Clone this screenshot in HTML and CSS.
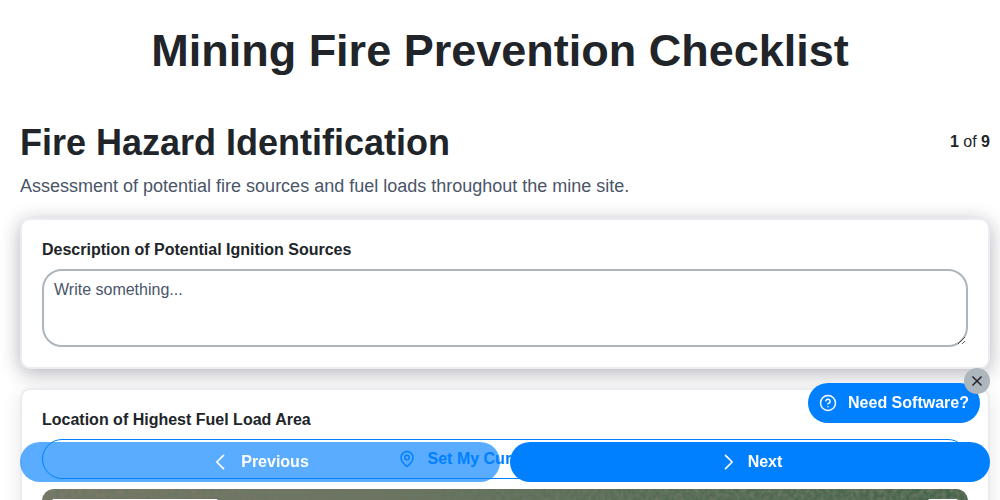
FILE: index.html
```html
<!DOCTYPE html>
<html lang="en">
<head>
    <meta charset="UTF-8">
    <meta name="viewport" content="width=device-width, initial-scale=1.0">
    <title>Mining Fire Prevention Checklist</title>
    <link rel="stylesheet" href="styles.css">
</head>
<body>
    <div class="page">
        <h1>Mining Fire Prevention Checklist</h1>
        <div class="section-head">
            <h2>Fire Hazard Identification</h2>
            <div class="step-count"><b>1</b> of <b>9</b></div>
        </div>
        <p class="section-desc">Assessment of potential fire sources and fuel loads throughout the mine site.</p>

        <div class="card card-first">
            <label class="field-label">Description of Potential Ignition Sources</label>
            <textarea class="field-text" placeholder="Write something..."></textarea>
        </div>

        <div class="card">
            <label class="field-label">Location of Highest Fuel Load Area</label>
            <button class="location-btn">
                <svg class="pin" width="18" height="18" viewBox="0 0 24 24" fill="none" stroke="currentColor" stroke-width="2" stroke-linecap="round" stroke-linejoin="round"><path d="M20 10c0 6-8 12-8 12s-8-6-8-12a8 8 0 0 1 16 0z"/><circle cx="12" cy="10" r="3"/></svg>
                Set My Current Location
            </button>
            <div class="map">
                <!-- satellite imagery stand-in: noise over the gradient -->
                <svg class="map-noise" width="926" height="200">
                    <filter id="terrain">
                        <feTurbulence type="fractalNoise" baseFrequency="0.22" numOctaves="4" seed="4"/>
                        <feColorMatrix type="matrix" values="0 0 0 0 0.14  0 0 0 0 0.18  0 0 0 0 0.13  2.2 0 0 0 -0.7"/>
                    </filter>
                    <rect width="926" height="200" filter="url(#terrain)"/>
                </svg>
                <div class="map-search"></div>
                <div class="map-control"></div>
            </div>
        </div>
    </div>

    <div class="help-wrap">
        <button class="help-btn">
            <svg width="18" height="18" viewBox="0 0 24 24" fill="none" stroke="currentColor" stroke-width="2" stroke-linecap="round" stroke-linejoin="round"><circle cx="12" cy="12" r="10"/><path d="M9.1 9a3 3 0 0 1 5.8 1c0 2-3 3-3 3"/><path d="M12 17h.01"/></svg>
            Need Software?
        </button>
        <button class="help-close" aria-label="Close">
            <svg width="14" height="14" viewBox="0 0 24 24" fill="none" stroke="currentColor" stroke-width="2.6" stroke-linecap="round"><path d="M5 5l14 14M19 5L5 19"/></svg>
        </button>
    </div>

    <div class="nav-bar">
        <button class="nav-btn nav-prev">
            <svg width="20" height="20" viewBox="0 0 24 24" fill="none" stroke="currentColor" stroke-width="2" stroke-linecap="round" stroke-linejoin="round"><path d="M15 4l-8 8 8 8"/></svg>
            Previous
        </button>
        <button class="nav-btn nav-next">
            <svg width="20" height="20" viewBox="0 0 24 24" fill="none" stroke="currentColor" stroke-width="2" stroke-linecap="round" stroke-linejoin="round"><path d="M9 4l8 8-8 8"/></svg>
            Next
        </button>
    </div>
</body>
</html>
```

FILE: styles.css
```css
html, body {
    height: 100%;
    overflow: hidden;
}
body {
    font-family: "Liberation Sans", Arial, sans-serif;
    background-color: #ffffff;
    color: #212529;
    margin: 0;
}
.page {
    padding: 0 10px 0 20px;
    height: 500px;
    overflow: hidden;
    box-sizing: border-box;
}
h1 {
    font-size: 45px;
    line-height: 58px;
    font-weight: 700;
    text-align: center;
    margin: 0 10px 0 0;
    padding: 22px 0 41px;
}
.section-head {
    display: flex;
    justify-content: space-between;
    align-items: flex-start;
}
h2 {
    font-size: 36px;
    line-height: 43px;
    font-weight: 700;
    margin: 0;
}
.step-count {
    font-size: 16px;
    line-height: 19px;
    padding-top: 11px;
}
.section-desc {
    font-size: 18px;
    line-height: 22px;
    color: #4a5568;
    margin: 11px 0 21px;
}
.card {
    width: 970px;
    box-sizing: border-box;
    background-color: #ffffff;
    border: 2px solid #ebebf2;
    border-radius: 10px;
    padding: 20px;
    margin-bottom: 20px;
    box-shadow: 0 4px 20px rgba(0, 0, 0, 0.1);
}
.card-first {
    margin-bottom: 19px;
    box-shadow: 0 4px 20px rgba(20, 20, 40, 0.32);
}
.field-label {
    display: block;
    font-size: 16px;
    line-height: 19px;
    font-weight: 700;
    margin-bottom: 10px;
}
.field-text {
    display: block;
    width: 100%;
    height: 78px;
    box-sizing: border-box;
    border: 2px solid #adb5bd;
    border-radius: 20px;
    padding: 10px;
    font-family: "Liberation Sans", Arial, sans-serif;
    font-size: 16px;
    line-height: 18px;
    color: #4a5568;
    background: #ffffff;
    outline: none;
}
.field-text::placeholder {
    color: #4a5568;
    opacity: 1;
}
.location-btn {
    display: flex;
    align-items: center;
    justify-content: center;
    gap: 12px;
    width: 100%;
    height: 40px;
    background: #ffffff;
    color: #0080ff;
    border: 1px solid #0080ff;
    border-radius: 20px;
    font-family: "Liberation Sans", Arial, sans-serif;
    font-size: 16px;
    font-weight: 700;
    margin-bottom: 10px;
    padding: 0;
}
.map {
    position: relative;
    height: 200px;
    overflow: hidden;
    border-radius: 12px;
    background: linear-gradient(90deg, #7c7a66, #6e7460 35%, #556c52 65%, #446448);
}
.map-noise {
    display: block;
}
.map-search {
    position: absolute;
    left: 10px;
    top: 10px;
    width: 166px;
    height: 30px;
    background-color: #ffffff;
    border-radius: 2px;
}
.map-control {
    position: absolute;
    right: 10px;
    top: 10px;
    width: 30px;
    height: 30px;
    background-color: #ffffff;
    border-radius: 2px;
}
.nav-bar {
    position: fixed;
    left: 20px;
    right: 10px;
    top: 442px;
    display: flex;
    gap: 10px;
}
.nav-btn {
    flex: 1;
    height: 40px;
    border: none;
    border-radius: 20px;
    display: flex;
    align-items: center;
    justify-content: center;
    gap: 10px;
    font-family: "Liberation Sans", Arial, sans-serif;
    font-size: 16px;
    font-weight: 700;
    color: #ffffff;
    padding: 0;
}
.nav-prev {
    background-color: rgba(0, 128, 255, 0.65);
}
.nav-next {
    background-color: #0080ff;
}
.help-wrap {
    position: fixed;
    left: 808px;
    top: 383px;
}
.help-btn {
    width: 172px;
    height: 40px;
    background-color: #0080ff;
    color: #ffffff;
    border: none;
    border-radius: 20px;
    display: flex;
    align-items: center;
    justify-content: center;
    gap: 11px;
    font-family: "Liberation Sans", Arial, sans-serif;
    font-size: 16px;
    font-weight: 700;
    padding: 0;
}
.help-close {
    position: absolute;
    top: -15px;
    right: -10px;
    width: 26px;
    height: 26px;
    border: none;
    border-radius: 50%;
    background-color: #adb5bd;
    color: #212529;
    display: flex;
    align-items: center;
    justify-content: center;
    padding: 0;
}
```
